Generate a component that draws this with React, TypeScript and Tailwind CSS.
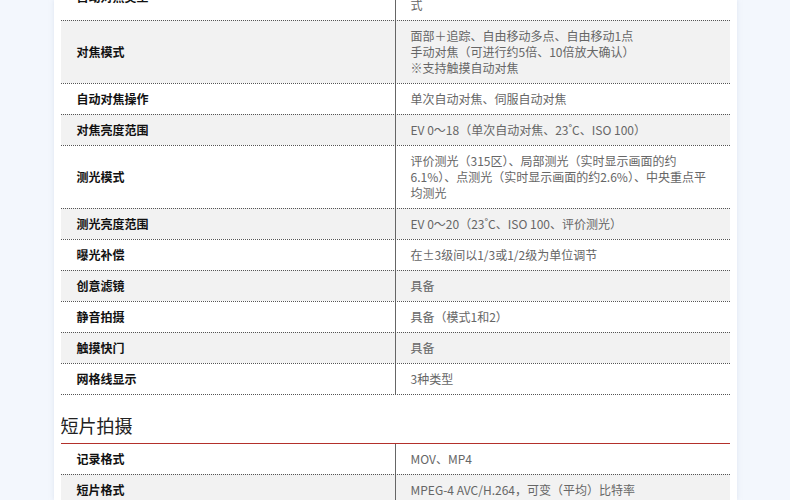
import React from "react";

type Row = { label: string; lines: string[] };

const focusRows: Row[] = [
  { label: "自动对焦类型", lines: ["全像素双核CMOS AF（图像感应器相位差检测方", "式"] },
  {
    label: "对焦模式",
    lines: [
      "面部＋追踪、自由移动多点、自由移动1点",
      "手动对焦（可进行约5倍、10倍放大确认）",
      "※支持触摸自动对焦",
    ],
  },
  { label: "自动对焦操作", lines: ["单次自动对焦、伺服自动对焦"] },
  { label: "对焦亮度范围", lines: ["EV 0～18（单次自动对焦、23˚C、ISO 100）"] },
  {
    label: "测光模式",
    lines: [
      "评价测光（315区）、局部测光（实时显示画面的约",
      "6.1%）、点测光（实时显示画面的约2.6%）、中央重点平",
      "均测光",
    ],
  },
  { label: "测光亮度范围", lines: ["EV 0～20（23˚C、ISO 100、评价测光）"] },
  { label: "曝光补偿", lines: ["在±3级间以1/3或1/2级为单位调节"] },
  { label: "创意滤镜", lines: ["具备"] },
  { label: "静音拍摄", lines: ["具备（模式1和2）"] },
  { label: "触摸快门", lines: ["具备"] },
  { label: "网格线显示", lines: ["3种类型"] },
];

const movieRows: Row[] = [
  { label: "记录格式", lines: ["MOV、MP4"] },
  { label: "短片格式", lines: ["MPEG-4 AVC/H.264，可变（平均）比特率"] },
];

const SpecTable = ({ rows, first }: { rows: Row[]; first?: boolean }) => (
  <div className={first ? "border-b border-dotted border-[#555]" : "border-t border-[#b3302b]"}>
    {rows.map((row, ind) => (
      <div
        key={ind}
        className={`grid grid-cols-[334px_336px] ${
          ind % 2 === 1 ? "bg-[#f2f2f2]" : "bg-white"
        } ${ind === 0 && !first ? "" : "border-t border-dotted border-[#555]"}`}
      >
        <div className="flex items-center pl-4 py-[7px] text-[12px] leading-4 font-bold text-[#111]">
          {row.label}
        </div>
        <div className="border-l border-[#666] pl-[15px] py-[7px] text-[12px] leading-4 text-[#666]">
          {row.lines.map((line, i) => (
            <div key={i} className="whitespace-nowrap">
              {line}
            </div>
          ))}
        </div>
      </div>
    ))}
  </div>
);

export default function App() {
  return (
    <div
      className="h-[500px] overflow-hidden bg-[#f3f7fd] flex justify-center"
      style={{ fontFamily: '"Noto Sans CJK SC", "Noto Sans", sans-serif' }}
    >
      <div className="w-[683px] bg-white px-[7px] shadow-[0_0_4px_rgba(200,210,230,0.5)]">
        <div className="-mt-[27px]">
          <SpecTable rows={focusRows} first />
          <div className="mt-[18px] mb-[6px] text-[18px] leading-6 text-[#222]">短片拍摄</div>
          <SpecTable rows={movieRows} />
        </div>
      </div>
    </div>
  );
}
